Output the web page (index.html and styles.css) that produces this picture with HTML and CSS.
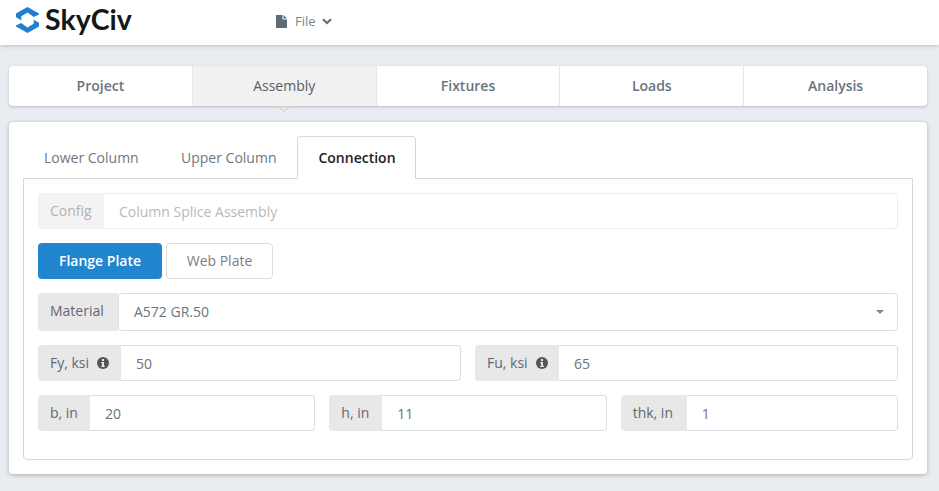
FILE: index.html
```html
<!DOCTYPE html>
<html lang="en">
<head>
<meta charset="utf-8">
<title>SkyCiv</title>
<link rel="stylesheet" href="styles.css">
</head>
<body>
<header class="topbar">
  <div class="logo">
    <svg class="logo-mark" width="24" height="26" viewBox="0 0 24 26" aria-hidden="true">
      <path fill="#1f7fd0" d="M11.5 0 L23 6.5 L23 7.5 L17.8 10 L11.5 5.5 L5.3 9.3 L5.3 13.2 L0 10.2 L0 6.5 Z"/>
      <path fill="#1f7fd0" d="M11.5 26 L0 19.5 L0 18.5 L5.2 16 L11.5 20.5 L17.7 16.7 L17.7 12.8 L23 15.8 L23 19.5 Z"/>
    </svg>
    <span class="logo-text">SkyCiv</span>
  </div>
  <div class="file-menu">
    <svg class="file-icon" width="11" height="13" viewBox="0 0 11 13" aria-hidden="true"><path fill="#5f6b75" d="M0 0 H6.5 V4.5 H11 V13 H0 Z M7.5 0 L11 3.5 H7.5 Z"/></svg>
    <span>File</span>
    <svg class="chev" width="10" height="7" viewBox="0 0 10 7" aria-hidden="true"><path fill="none" stroke="#5f6b75" stroke-width="2" d="M1 1.2 L5 5 L9 1.2"/></svg>
  </div>
</header>

<main class="page">
  <nav class="steps">
    <div class="step">Project</div>
    <div class="step active">Assembly</div>
    <div class="step">Fixtures</div>
    <div class="step">Loads</div>
    <div class="step">Analysis</div>
  </nav>

  <section class="card">
    <div class="tabs">
      <div class="tab tab-lower">Lower Column</div>
      <div class="tab tab-upper">Upper Column</div>
      <div class="tab current">Connection</div>
    </div>
    <div class="tab-body">
      <div class="group disabled">
        <span class="addon config-label">Config</span>
        <span class="field">Column Splice Assembly</span>
      </div>

      <div class="buttons">
        <button class="btn primary">Flange Plate</button>
        <button class="btn plain">Web Plate</button>
      </div>

      <div class="group material">
        <span class="addon material-label">Material</span>
        <span class="field select">A572 GR.50<i class="caret"></i></span>
      </div>

      <div class="row two">
        <div class="group">
          <span class="addon fy">Fy, ksi
            <svg class="info" width="12" height="12" viewBox="0 0 12 12" aria-hidden="true"><circle cx="6" cy="6" r="6" fill="#555"/><rect x="5" y="2" width="2" height="2" fill="#e8e8e8"/><path fill="#e8e8e8" d="M4.3 5 H7 V8.8 H7.8 V10 H4.3 V8.8 H5.1 V6.2 H4.3 Z"/></svg>
          </span>
          <span class="field">50</span>
        </div>
        <div class="group">
          <span class="addon fu">Fu, ksi
            <svg class="info" width="12" height="12" viewBox="0 0 12 12" aria-hidden="true"><circle cx="6" cy="6" r="6" fill="#555"/><rect x="5" y="2" width="2" height="2" fill="#e8e8e8"/><path fill="#e8e8e8" d="M4.3 5 H7 V8.8 H7.8 V10 H4.3 V8.8 H5.1 V6.2 H4.3 Z"/></svg>
          </span>
          <span class="field">65</span>
        </div>
      </div>

      <div class="row three">
        <div class="group"><span class="addon">b, in</span><span class="field">20</span></div>
        <div class="group"><span class="addon">h, in</span><span class="field">11</span></div>
        <div class="group"><span class="addon">thk, in</span><span class="field">1</span></div>
      </div>
    </div>
  </section>
</main>
</body>
</html>
```
FILE: styles.css
```css
* { box-sizing: border-box; }
html, body { margin: 0; padding: 0; }
body {
  width: 939px;
  height: 491px;
  overflow: hidden;
  background: #e9edf1;
  font-family: "Open Sans", sans-serif;
  font-size: 14px;
  color: #5f6b75;
}

.topbar {
  height: 45px;
  background: #fff;
  box-shadow: 0 1px 4px rgba(0, 0, 0, 0.2);
  display: flex;
  align-items: center;
}
.logo { display: flex; align-items: center; width: 276px; padding-left: 16px; }
.logo-mark { display: block; margin-top: -5px; }
.logo-text {
  font-family: Lato, sans-serif;
  font-weight: 700;
  font-size: 28.5px;
  line-height: 32px;
  color: #14171a;
  margin-left: 5px;
  margin-top: -7px;
}
.file-menu {
  display: flex;
  align-items: center;
  font-size: 13px;
  color: #7b858d;
  margin-top: -3px;
}
.file-icon { margin-right: 8px; }
.chev { margin-left: 6px; }

.page { padding: 21px 12px 0 9px; }

.steps {
  position: relative;
  height: 40px;
  display: flex;
  background: #fff;
  border-radius: 4px;
  box-shadow: 0 1px 3px rgba(0, 0, 0, 0.22);
}
.step {
  flex: 1;
  display: flex;
  align-items: center;
  justify-content: center;
  padding-bottom: 2px;
  font-weight: 600;
  font-size: 14px;
  color: #6a747c;
  border-right: 1px solid #e6e6e6;
}
.step:last-child { border-right: 0; border-radius: 0 4px 4px 0; }
.step:first-child { border-radius: 4px 0 0 4px; }
.step.active { position: relative; background: #f1f1f1; color: #555f67; font-weight: 400; }
.step.active::after {
  content: "";
  position: absolute;
  left: 50%;
  bottom: -5px;
  width: 10px;
  height: 10px;
  margin-left: -5px;
  background: #f1f1f1;
  transform: rotate(45deg) scale(0.72);
  box-shadow: 1px 1px 1px rgba(0, 0, 0, 0.16);
  z-index: -1;
}

.card {
  margin-top: 16px;
  height: 352px;
  background: #fff;
  border-radius: 4px;
  padding: 14px;
  box-shadow: 0 1px 4px rgba(0, 0, 0, 0.28);
}

.tabs {
  height: 43px;
  display: flex;
  margin-bottom: -1px;
  position: relative;
}
.tab {
  height: 43px;
  padding-top: 11px;
  font-size: 14px;
  line-height: 22px;
  color: #6d7780;
}
.tab-lower { margin-left: 21px; width: 137px; }
.tab-upper { width: 116px; }
.tab.current {
  width: 119px;
  padding-top: 10px;
  padding-left: 1px;
  text-align: center;
  font-weight: 600;
  color: #1c2126;
  background: #fff;
  border: 1px solid #d5d8da;
  border-bottom-color: #fff;
  border-radius: 4px 4px 0 0;
}

.tab-body {
  height: 282px;
  border: 1px solid #d5d8da;
  border-radius: 0 0 4px 4px;
  padding: 14px;
  display: flex;
  flex-direction: column;
  gap: 14px;
}

.group {
  height: 36px;
  display: flex;
  flex: 1;
  min-width: 0;
  border-radius: 4px;
}
.group.material { flex: none; height: 38px; }
.group.disabled { flex: none; opacity: 0.5; }
.addon {
  display: flex;
  align-items: center;
  gap: 8px;
  padding: 0 12px 1px;
  background: #e8e8e8;
  border-radius: 4px 0 0 4px;
  font-size: 14px;
  color: #5f6870;
  white-space: nowrap;
}
.field {
  flex: 1;
  display: flex;
  align-items: center;
  padding-left: 15px;
  border: 1px solid #dcdfe1;
  border-left: 0;
  border-radius: 0 4px 4px 0;
  font-size: 14px;
  color: #69747d;
  background: #fff;
}
.config-label { width: 66px; }
.material-label { width: 80px; padding-bottom: 3px; }
.select {
  position: relative;
  padding-bottom: 1px;
  border-left: 1px solid #dcdfe1;
  border-radius: 4px;
}
.caret {
  position: absolute;
  right: 13px;
  top: 16px;
  width: 0;
  height: 0;
  border-left: 4px solid transparent;
  border-right: 4px solid transparent;
  border-top: 4px solid #7a858d;
}
.info { flex: none; }
.fy { width: 83px; }
.fu { width: 84px; }

.buttons { display: flex; gap: 4px; }
.btn {
  height: 36px;
  padding: 0 0 2px;
  border-radius: 4px;
  font-family: inherit;
  font-size: 14px;
}
.primary {
  width: 124px;
  background: #2185d0;
  border: 0;
  color: #fff;
  font-weight: 600;
}
.plain {
  width: 107px;
  background: #fff;
  border: 1px solid #d9dcde;
  color: #7a7f84;
}

.row { display: flex; gap: 14px; }
.row.three .group:nth-child(1) .addon { width: 52px; }
.row.three .group:nth-child(2) .addon { width: 53px; }
.row.three .group:nth-child(3) .addon { width: 66px; }
```
